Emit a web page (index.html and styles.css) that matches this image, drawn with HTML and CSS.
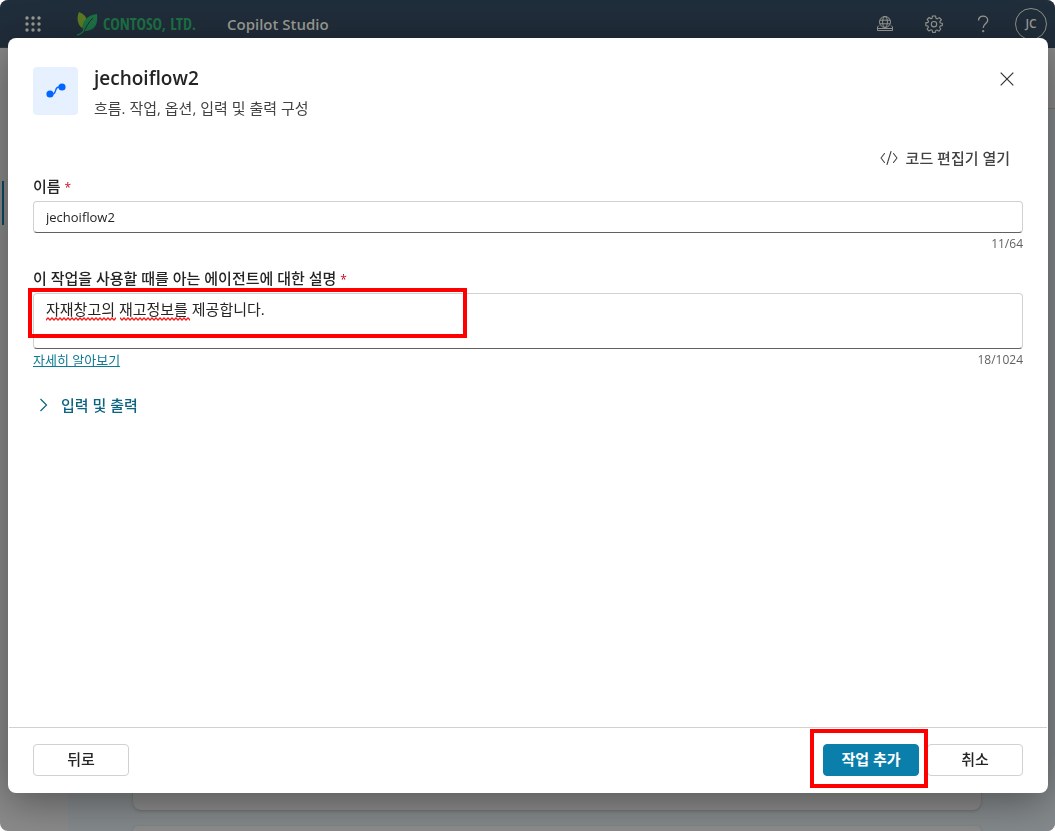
FILE: index.html
```html
<!DOCTYPE html>
<html lang="ko">
<head>
<meta charset="utf-8">
<meta name="viewport" content="width=device-width, initial-scale=1">
<title>Copilot Studio</title>
<link rel="stylesheet" href="styles.css">
</head>
<body>
<div class="app">
  <header class="topbar">
    <button class="icon-btn" type="button" aria-label="앱 시작 관리자">
      <svg width="18" height="18" viewBox="0 0 18 18" fill="currentColor"><circle cx="3" cy="3" r="1.7"/><circle cx="9" cy="3" r="1.7"/><circle cx="15" cy="3" r="1.7"/><circle cx="3" cy="9" r="1.7"/><circle cx="9" cy="9" r="1.7"/><circle cx="15" cy="9" r="1.7"/><circle cx="3" cy="15" r="1.7"/><circle cx="9" cy="15" r="1.7"/><circle cx="15" cy="15" r="1.7"/></svg>
    </button>
    <a class="brand" href="#">
      <svg width="22" height="26" viewBox="0 0 22 26"><path d="M3 1C10 4 12 8 9 13L6 17C2 14 0 8 3 1Z" fill="#5c7a24"/><path d="M21 3C22 12 20 19 10 20L7 20C5 12 10 4 21 3Z" fill="#1e7145"/><path d="M17 7C12 11 10 18 7 21Q5 24 1 24" fill="none" stroke="#202d3a" stroke-width="1"/><path d="M8 19Q6 23 1 24" fill="none" stroke="#1e7145" stroke-width="1.4"/></svg>
      <span class="brand-name">CONTOSO, LTD.</span>
    </a>
    <span class="product">Copilot Studio</span>
    <nav class="tools" aria-label="도구">
      <button class="icon-btn" type="button" aria-label="환경">
        <svg width="18" height="18" viewBox="0 0 18 18" fill="none" stroke="currentColor"><circle cx="9" cy="7" r="5.5"/><ellipse cx="9" cy="7" rx="2.4" ry="5.5"/><path d="M4 5.2H14M4 8.8H14M3 10.5L1.5 12V15.5H16.5V12L15 10.5M1.5 13.5H16.5"/></svg>
      </button>
      <button class="icon-btn" type="button" aria-label="설정">
        <svg width="18" height="18" viewBox="0 0 18 18" fill="none" stroke="currentColor" stroke-width="1.1" stroke-linejoin="round"><path d="M7.4 1H10.6L11 3.3L12.3 3.9L14.3 2.6L16.4 4.7L14.8 6.7L15.3 8L17.3 8.3V10.6L15.1 11L14.6 12.3L15.8 14.2L14 16.2L12 14.9L10.8 15.4L10.4 17.4H7.6L7.2 15.3L6 14.8L4 16L2.1 14.1L3.4 12.2L2.9 11L.8 10.6V7.9L3.1 7.4L3.5 6.3L2.2 4.4L4.2 2.5L6 3.7L7.1 3.3Z"/><circle cx="9" cy="9.2" r="2.7"/></svg>
      </button>
      <button class="icon-btn" type="button" aria-label="도움말">
        <svg width="18" height="18" viewBox="0 0 18 18" fill="none" stroke="currentColor" stroke-width="1.3"><path d="M4.5 5.5C4.5 2.8 6.5 1.2 9 1.2S13.7 2.8 13.7 5.3C13.7 8.8 9.2 8.5 9.2 13"/><circle cx="9.2" cy="16.2" r=".5" fill="currentColor"/></svg>
      </button>
    </nav>
    <button class="avatar" type="button" aria-label="계정">JC</button>
  </header>
  <div class="workspace">
    <aside class="rail"><div class="rail-active"></div></aside>
    <main class="page">
      <div class="page-head"></div>
      <div class="cards"><div class="card card-fill"></div><div class="card card-next"></div></div>
    </main>
  </div>
</div>

<div class="backdrop">
  <section class="dialog" role="dialog" aria-modal="true" aria-labelledby="title">
    <header class="dialog-head">
      <div class="flow-icon">
        <svg width="22" height="18" viewBox="0 0 22 18"><path d="M5 12H7.5C12 12 9 5 14 5H17" fill="none" stroke="#0f6cff" stroke-width="1.4"/><circle cx="5" cy="12" r="3.6" fill="#0066ff"/><circle cx="17" cy="5" r="3.6" fill="#0066ff"/></svg>
      </div>
      <div class="heading">
        <h1 class="title" id="title">jechoiflow2</h1>
        <p class="subtitle">흐름. 작업, 옵션, 입력 및 출력 구성</p>
      </div>
      <button class="close" type="button" aria-label="닫기">
        <svg width="14" height="14" viewBox="0 0 14 14" fill="none" stroke="currentColor" stroke-width="1.2"><path d="M.7.7L13.3 13.3M13.3.7L.7 13.3"/></svg>
      </button>
    </header>
    <form class="form" id="action-form">
      <button class="code-btn" type="button">
        <svg width="18" height="16" viewBox="0 0 18 16" fill="none" stroke="currentColor" stroke-width="1.1" stroke-linecap="round" stroke-linejoin="round"><path d="M4.5 3.5L1 8L4.5 12.5M13.5 3.5L17 8L13.5 12.5M11 1.5L7 14.5"/></svg>
        코드 편집기 열기
      </button>
      <div class="field">
        <label class="label" for="name">이름 <span class="required">*</span></label>
        <input class="control" id="name" type="text" value="jechoiflow2" maxlength="64">
        <div class="field-foot"><span class="count">11/64</span></div>
      </div>
      <div class="field">
        <label class="label" for="description">이 작업을 사용할 때를 아는 에이전트에 대한 설명 <span class="required">*</span></label>
        <div class="area-wrap">
          <textarea class="control area" id="description" spellcheck="false" maxlength="1024">자재창고의 재고정보를 제공합니다.</textarea>
          <svg class="spelling" width="144" height="4" aria-hidden="true"><defs><pattern id="wave" width="4" height="4" patternUnits="userSpaceOnUse"><path d="M-1 2L0 3L2 1L4 3L5 2" fill="none" stroke="#f02020" stroke-width="1.3"/></pattern></defs><rect width="70" height="4" fill="url(#wave)"/><rect x="74" width="70" height="4" fill="url(#wave)"/></svg>
          <div class="mark mark-area"></div>
        </div>
        <div class="field-foot"><a class="link" href="#">자세히 알아보기</a><span class="count">18/1024</span></div>
      </div>
      <button class="expander" type="button" aria-expanded="false">
        <svg width="10" height="14" viewBox="0 0 10 14" fill="none" stroke="currentColor" stroke-width="1.2"><path d="M1.5 1L7.5 7L1.5 13"/></svg>
        입력 및 출력
      </button>
    </form>
    <footer class="actions">
      <button class="btn" type="button">뒤로</button>
      <div class="actions-end">
        <div class="primary-wrap"><button class="btn btn-primary" type="submit" form="action-form">작업 추가</button><div class="mark mark-btn"></div></div>
        <button class="btn" type="button">취소</button>
      </div>
    </footer>
  </section>
</div>
</body>
</html>
```
FILE: styles.css
```css
* { box-sizing: border-box; }
body {
  margin: 0;
  background: #fff;
  color: #242424;
  font: 15px/20px "Open Sans", "Noto Sans CJK KR", sans-serif;
}
button, input, textarea { font: inherit; color: inherit; }
button { padding: 0; border: 0; background: none; }
svg { display: block; flex: none; }

.app {
  display: flex;
  flex-direction: column;
  height: 100vh;
  overflow: hidden;
  border-radius: 8px;
  background: #8a8a8a;
}
.topbar {
  display: flex;
  align-items: center;
  flex: none;
  height: 48px;
  padding: 0 8px 0 24px;
  background: #202d3a;
  color: #9a9c94;
}
.brand { display: flex; align-items: center; gap: 5px; margin-left: 34px; text-decoration: none; }
.brand-name {
  color: #1e7145;
  font: bold 16px/20px "Open Sans Condensed", "DejaVu Sans Condensed", sans-serif;
  white-space: nowrap;
}
.product { margin-left: 31px; font-size: 15px; font-weight: 600; }
.tools { display: flex; gap: 31px; margin: 0 23px 0 auto; }
.avatar {
  width: 32px;
  height: 32px;
  border: 1px solid #8e9288;
  border-radius: 50%;
  font-size: 12px;
  font-weight: 600;
}

.workspace { display: grid; grid-template-columns: 68px 1fr; flex: 1; min-height: 0; }
.rail { padding: 133px 2px 0; box-shadow: 0 0 2px #555; }
.rail-active { width: 2px; height: 44px; background: #0a4a5e; }
.page { display: flex; flex-direction: column; min-height: 0; background: #84898b; }
.page-head { flex: none; height: 61px; border-bottom: 1px solid #777; background: #8a8a8a; }
.cards { display: flex; flex-direction: column; flex: 1; gap: 16px; padding: 20px 74px 0 65px; }
.card { border-radius: 8px; background: #8c8c8c; box-shadow: 0 1px 3px #6c6c6c; }
.card-fill { flex: 1; }
.card-next { height: 5px; border-radius: 8px 8px 0 0; }

.backdrop { position: fixed; inset: 0; display: grid; padding: 38px 7px 38px 8px; }
.dialog {
  display: flex;
  flex-direction: column;
  min-width: 0;
  border-radius: 8px;
  background: #fff;
  box-shadow: 0 8px 40px rgba(0, 0, 0, .4);
}
.dialog-head { display: flex; gap: 16px; padding: 29px 34px 0 25px; }
.flow-icon {
  display: grid;
  place-items: center;
  flex: none;
  width: 45px;
  height: 48px;
  border-radius: 4px;
  background: #e6f0ff;
}
.title { margin: 0; font-size: 19px; line-height: 22px; font-weight: 600; }
.subtitle { margin: 9px 0 0; color: #424242; }
.close { align-self: flex-start; margin: 5px 0 0 auto; color: #333; }

.form { display: flex; flex-direction: column; flex: 1; padding: 28px 25px 0; }
.code-btn {
  display: flex;
  align-items: center;
  align-self: flex-end;
  gap: 8px;
  height: 24px;
  margin-right: 13px;
  color: #424242;
  font-weight: 500;
}
.field { display: flex; flex-direction: column; margin-top: 6px; }
.field + .field { margin-top: 15px; }
.label { margin-bottom: 3px; font-weight: 500; }
.required { color: #c50f1f; font-size: 12px; }
.control {
  display: block;
  width: 100%;
  height: 32px;
  padding: 0 12px;
  border: 1px solid #d1d1d1;
  border-bottom-color: #616161;
  border-radius: 4px;
  background: #fff;
  outline: 0;
  font-size: 13px;
}
.area-wrap { position: relative; }
.area { height: 56px; padding: 5px 12px; resize: none; font-size: 15px; line-height: 20px; }
.spelling { position: absolute; top: 24px; left: 13px; }
.mark { position: absolute; border: 4px solid #f00; pointer-events: none; }
.mark-area { top: -5px; left: -5px; width: 439px; height: 50px; }
.field-foot { display: flex; justify-content: space-between; margin-top: 2px; font-size: 12px; line-height: 18px; }
.count { margin-left: auto; color: #616161; }
.link { color: #0f7b93; font-size: 13px; }
.expander {
  display: flex;
  align-items: center;
  align-self: flex-start;
  gap: 12px;
  margin: 26px 0 0 6px;
  color: #0b6380;
  font-weight: 500;
}

.actions {
  display: flex;
  justify-content: space-between;
  margin: 0 1px;
  padding: 16px 24px 17px;
  border-top: 1px solid #d1d1d1;
}
.actions-end { display: flex; gap: 8px; }
.btn {
  width: 96px;
  height: 32px;
  padding-bottom: 2px;
  border: 1px solid #d1d1d1;
  border-radius: 4px;
  background: #fff;
  font-weight: 500;
}
.primary-wrap { position: relative; }
.btn-primary { border-color: #0a7fab; background: #0a7fab; color: #fff; font-weight: 700; }
.mark-btn { top: -15px; left: -13px; width: 118px; height: 59px; }
```
